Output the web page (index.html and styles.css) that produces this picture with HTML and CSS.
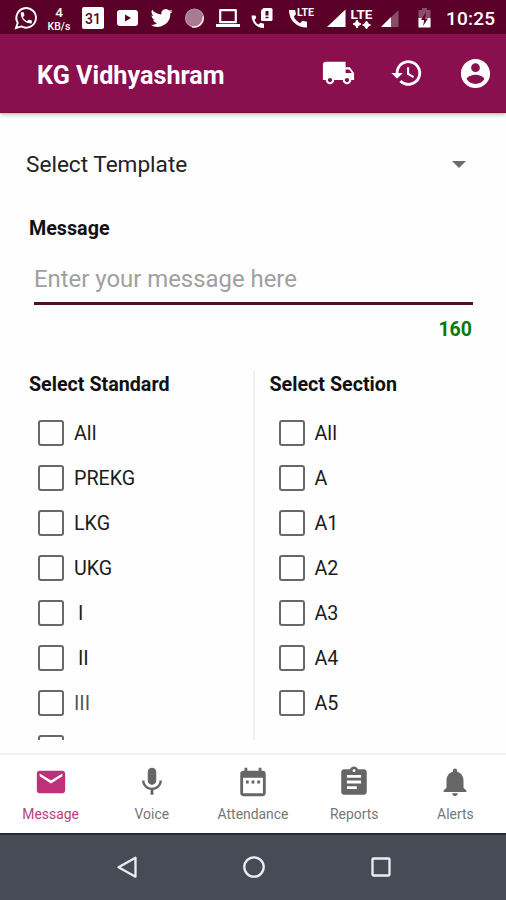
FILE: index.html
```html
<!DOCTYPE html>
<html lang="en">
<head>
<meta charset="utf-8">
<title>KG Vidhyashram</title>
<link rel="stylesheet" href="styles.css">
</head>
<body>
<div class="phone">
  <div class="status">
    <svg class="s-icon" width="24" height="24" viewBox="0 0 24 24"><path d="M2 22l1.700-5.200A9.800 9.800 0 1 1 7.400 20.400z" fill="none" stroke="#fff" stroke-width="1.900"/><path transform="translate(4.800 4.500) scale(.62)" fill="#fff" d="M6.600 10.800c1.400 2.800 3.800 5.100 6.600 6.600l2.200-2.200c.3-.3.7-.4 1-.2 1.100.4 2.300.6 3.600.6.600 0 1 .4 1 1V20c0 .6-.4 1-1 1C10.600 21 3 13.400 3 4c0-.6.5-1 1-1h3.500c.6 0 1 .4 1 1 0 1.300.2 2.500.6 3.600.1.300 0 .7-.3 1z"/></svg>
    <div class="speed"><span class="speed-value">4</span><span>KB/s</span></div>
    <div class="date">31</div>
    <svg class="s-icon" width="23" height="24" viewBox="0 0 23 24"><rect x="1" y="4" width="21" height="16" rx="3" fill="#fff"/><path d="M9 8.500v7l6-3.500z" fill="#5a0029"/></svg>
    <svg class="s-icon" width="23" height="24" viewBox="0 0 24 24"><path fill="#fff" d="M23.600 4.900c-.8.400-1.700.6-2.700.7 1-.6 1.700-1.500 2.100-2.600-.9.500-1.900.9-3 1.100A4.700 4.700 0 0 0 12 8.400C8 8.200 4.500 6.300 2.200 3.400c-1.200 2.100-.6 4.900 1.500 6.300-.8 0-1.500-.2-2.100-.6 0 2.200 1.500 4.300 3.700 4.700-.7.200-1.400.2-2.100.1.600 1.900 2.300 3.200 4.400 3.300A9.500 9.500 0 0 1 .6 19.100a13.400 13.400 0 0 0 20.600-11.900c1-.6 1.800-1.400 2.400-2.300z"/></svg>
    <svg class="s-icon" width="20" height="24" viewBox="0 0 20 24"><circle cx="10.500" cy="12" r="9" fill="#a97b92" stroke="#bd93a8" stroke-width="1.200"/><path d="M19 10.500a9 9 0 0 1-11 10.200" fill="none" stroke="#f3e6ec" stroke-width="1.600"/></svg>
    <svg class="s-icon" width="24" height="24" viewBox="0 0 24 24"><path d="M4.200 4.200h15.600v12H4.200z" fill="none" stroke="#fff" stroke-width="2.200" stroke-linejoin="round"/><path d="M0 18h24v3H0z" fill="#fff"/></svg>
    <svg class="s-icon" width="22" height="24" viewBox="0 0 22 24"><path d="M.5 9.500C1 17 5.500 22 13 22v-4.300l-3.500-1-2 1.800C5.500 17.500 4 15.500 3.500 13.700l1.700-1.600-.7-2.600z" fill="#fff"/><path d="M12.500 2H20q1.500 0 1.500 1.500v10q0 1.500-1.500 1.500h-8.500Q10 15 10 13.500v-9z" fill="#fff"/><path d="M14.500 5h3v4.500h-3zm0 5.700h3v1.600h-3z" fill="#5a0029"/></svg>
    <div class="call-lte">
      <svg width="19" height="24" viewBox="0 0 19 24"><path d="M0 4c0 10 7 17.500 18 17.500v-5.700l-4.500-1-2.500 2.400C8 15.600 6 13.200 4.800 10.500L7 8.200 6 4z" fill="#fff"/></svg>
      <span class="call-tag">LTE</span>
    </div>
    <svg class="s-icon" width="19" height="24" viewBox="0 0 19 24"><path d="M18.500 3.500V21H0z" fill="#fff"/></svg>
    <div class="lte"><span>LTE</span><svg width="20" height="9" viewBox="0 0 20 9"><path d="M5 0l1.500 2.700L9 4 6.500 5.300 5 8 3.500 5.300 1 4l2.500-1.300zM14.500 1l1.500 2.700L18.500 5 16 6.300 14.500 9 13 6.300 10.500 5 13 3.700z" fill="#fff" stroke="#fff"/></svg></div>
    <svg class="s-icon" width="18" height="24" viewBox="0 0 18 24"><path d="M17.500 4v17H0z" fill="#8a4d69"/><path d="M10 11v10H0z" fill="#fff"/></svg>
    <svg class="s-icon" width="14" height="24" viewBox="0 0 14 24"><path d="M4 2h5v2h3.500v17H.5V4H4z" fill="#8a4d69"/><path d="M.5 12h12v9.500H.5z" fill="#fff"/><path d="M8 6l-5 8h3.200L5 20l5-7.500H7z" fill="#5a0029"/></svg>
    <div class="clock">10:25</div>
  </div>

  <header class="appbar">
    <h1>KG Vidhyashram</h1>
    <svg class="truck" width="35" height="34" viewBox="0 0 24 24"><path fill="#fff" d="M20 8h-3V4H3c-1.100 0-2 .9-2 2v11h2c0 1.660 1.340 3 3 3s3-1.340 3-3h6c0 1.660 1.340 3 3 3s3-1.340 3-3h2v-5l-3-4zM6 18.500c-.83 0-1.500-.67-1.500-1.500s.67-1.500 1.500-1.500 1.500.67 1.500 1.500-.67 1.500-1.500 1.500zm13.500-9l1.960 2.500H17V9.500h2.500zm-1.500 9c-.83 0-1.500-.67-1.500-1.500s.67-1.500 1.500-1.500 1.500.67 1.500 1.500-.67 1.500-1.500 1.500z"/></svg>
    <svg class="history" width="34" height="34" viewBox="0 0 24 24"><path fill="#fff" d="M13 3a9 9 0 0 0-9 9H1l3.890 3.890.07.14L9 12H6a7 7 0 1 1 2.060 4.940l-1.420 1.420A9 9 0 1 0 13 3zm-1 5v5l4.280 2.540.72-1.210-3.500-2.080V8H12z"/></svg>
    <svg class="account" width="35" height="35" viewBox="0 0 24 24"><path fill="#fff" d="M12 2C6.480 2 2 6.480 2 12s4.480 10 10 10 10-4.480 10-10S17.520 2 12 2zm0 3c1.660 0 3 1.340 3 3s-1.340 3-3 3-3-1.340-3-3 1.340-3 3-3zm0 14.200c-2.500 0-4.710-1.280-6-3.220.03-1.990 4-3.080 6-3.080 1.990 0 5.970 1.090 6 3.080-1.290 1.940-3.500 3.220-6 3.220z"/></svg>
  </header>

  <main class="content">
    <div class="template"><span>Select Template</span><span class="caret"></span></div>
    <h2 class="message-label">Message</h2>
    <div class="input">Enter your message here</div>
    <div class="count">160</div>
    <div class="columns">
      <section class="column">
        <h2>Select Standard</h2>
        <div class="option"><span class="box"></span><span>All</span></div>
        <div class="option"><span class="box"></span><span>PREKG</span></div>
        <div class="option"><span class="box"></span><span>LKG</span></div>
        <div class="option"><span class="box"></span><span>UKG</span></div>
        <div class="option"><span class="box"></span><span class="indented">I</span></div>
        <div class="option"><span class="box"></span><span class="indented">II</span></div>
        <div class="option"><span class="box"></span><span class="light">III</span></div>
        <div class="option"><span class="box"></span></div>
      </section>
      <section class="column second">
        <h2>Select Section</h2>
        <div class="option"><span class="box"></span><span>All</span></div>
        <div class="option"><span class="box"></span><span>A</span></div>
        <div class="option"><span class="box"></span><span>A1</span></div>
        <div class="option"><span class="box"></span><span>A2</span></div>
        <div class="option"><span class="box"></span><span>A3</span></div>
        <div class="option"><span class="box"></span><span>A4</span></div>
        <div class="option"><span class="box"></span><span>A5</span></div>
      </section>
    </div>
  </main>

  <nav class="tabs">
    <div class="tab active"><svg width="34" height="34" viewBox="0 0 24 24"><path d="M20 4H4c-1.100 0-1.990.9-1.990 2L2 18c0 1.100.9 2 2 2h16c1.100 0 2-.9 2-2V6c0-1.100-.9-2-2-2zm0 4l-8 5-8-5V6l8 5 8-5v2z"/></svg><span>Message</span></div>
    <div class="tab"><svg width="34" height="34" viewBox="0 0 24 24"><path d="M12 14c1.660 0 2.990-1.340 2.990-3L15 5c0-1.660-1.340-3-3-3S9 3.340 9 5v6c0 1.660 1.340 3 3 3zm5.300-3c0 3-2.540 5.100-5.300 5.100S6.700 14 6.700 11H5c0 3.410 2.720 6.230 6 6.720V21h2v-3.280c3.280-.48 6-3.300 6-6.720h-1.700z"/></svg><span>Voice</span></div>
    <div class="tab"><svg width="34" height="34" viewBox="0 0 24 24"><path d="M19 4h-1V2h-2v2H8V2H6v2H5c-1.100 0-2 .9-2 2v14c0 1.100.9 2 2 2h14c1.100 0 2-.9 2-2V6c0-1.100-.9-2-2-2zm0 16H5V9h14zM7 11h2v2H7zm4 0h2v2h-2zm4 0h2v2h-2z"/></svg><span>Attendance</span></div>
    <div class="tab"><svg width="34" height="34" viewBox="0 0 24 24"><path d="M19 3h-4.180C14.400 1.840 13.300 1 12 1s-2.400.84-2.820 2H5c-1.100 0-2 .9-2 2v14c0 1.100.9 2 2 2h14c1.100 0 2-.9 2-2V5c0-1.100-.9-2-2-2zm-7 0c.55 0 1 .45 1 1s-.45 1-1 1-1-.45-1-1 .45-1 1-1zm2 14H7v-2h7v2zm3-4H7v-2h10v2zm0-4H7V7h10v2z"/></svg><span>Reports</span></div>
    <div class="tab"><svg width="34" height="34" viewBox="0 0 24 24"><path d="M12 22c1.100 0 2-.9 2-2h-4c0 1.100.89 2 2 2zm6-6v-5c0-3.070-1.640-5.640-4.500-6.320V4c0-.83-.67-1.500-1.500-1.500s-1.500.67-1.500 1.500v.68C7.630 5.360 6 7.920 6 11v5l-2 2v1h16v-1l-2-2z"/></svg><span>Alerts</span></div>
  </nav>

  <div class="system">
    <svg width="24" height="24" viewBox="0 0 24 24"><path d="M20.500 2.700v19L3.500 12.200z"/></svg>
    <svg width="24" height="24" viewBox="0 0 24 24"><circle cx="12" cy="12" r="9.700"/></svg>
    <svg width="24" height="24" viewBox="0 0 24 24"><rect x="3.500" y="3.500" width="17" height="17" rx="1"/></svg>
  </div>
</div>
</body>
</html>
```
FILE: styles.css
```css
* { box-sizing: border-box; }
body { margin: 0; font-family: Roboto, "Liberation Sans", sans-serif; background: #fefefe; color: #111; }
h1, h2 { margin: 0; }
svg { display: block; flex: none; }
.phone { width: 506px; height: 900px; display: flex; flex-direction: column; overflow: hidden; }

.status {
  height: 34px; flex: none; padding-left: 14px; background: #5a0029; color: #fff;
  display: grid; align-items: center;
  grid-template-columns: 33px 35px 34px 34px 34px 32px 35px 38px 38px 23px 31px 37px 28px 1fr;
}
.speed { width: 24px; display: flex; flex-direction: column; align-items: center; font-size: 10.500px; font-weight: 500; line-height: 13px; }
.speed-value { font-size: 13.500px; line-height: 16px; }
.date { width: 22px; height: 22px; padding-top: 3px; background: #fff; color: #5a0029; border-radius: 2px; font-size: 14px; font-weight: 500; line-height: 18px; text-align: center; }
.call-lte { display: flex; align-items: flex-start; }
.call-tag { margin-left: -11px; font-size: 10.500px; font-weight: 700; line-height: 11px; padding-top: 1px; }
.lte { width: 23px; display: flex; flex-direction: column; align-items: center; font-size: 13.500px; font-weight: 700; line-height: 12px; }
.clock { font-size: 19px; font-weight: 500; line-height: 34px; padding-top: 2px; letter-spacing: .2px; white-space: nowrap; }

.appbar {
  height: 79px; flex: none; display: flex; align-items: center; padding: 0 13px 0 37px;
  background: #890f4f; border-bottom: 1px solid #74103f; color: #fff; box-shadow: 0 1px 4px rgba(0, 0, 0, .35);
}
.appbar h1 { flex: 1; font-size: 25.200px; font-weight: 700; line-height: 32px; padding-top: 5px; white-space: nowrap; }
.history { margin-left: 34px; }
.account { margin-left: 34px; }

.content { height: 640px; flex: none; padding: 33px 33px 0 29px; }
.template { display: flex; align-items: center; justify-content: space-between; height: 36px; margin-left: -3px; padding: 1px 7px 0 0; font-size: 22.600px; color: #222; }
.caret { width: 14px; height: 7px; background: #6d6d6d; clip-path: polygon(0 0, 100% 0, 50% 100%); }
.content h2 { font-size: 19.700px; font-weight: 700; line-height: 24px; white-space: nowrap; }
.content .message-label { margin-top: 35px; }
.input { height: 64px; margin-left: 5px; border-bottom: 3px solid #4d1029; font-size: 23.900px; line-height: 76px; color: #a0a0a0; }
.count { height: 24px; margin-top: 12px; padding-right: 1px; text-align: right; font-size: 19.500px; font-weight: 700; line-height: 26px; color: #087a0c; }
.columns { display: grid; grid-template-columns: 226px 1fr; height: 370px; margin-top: 29px; overflow: hidden; }
.column { padding-top: 3px; border-right: 2px solid #f1f1f1; }
.column.second { padding-left: 14.500px; border-right: 0; }
.column h2 { margin-bottom: 13px; }
.option { display: flex; align-items: center; gap: 10px; height: 45px; padding-left: 9px; font-size: 19.700px; line-height: 24px; color: #1c1c1c; }
.option span + span { padding-top: 3px; }
.box { width: 26px; height: 26px; border: 2px solid #686868; border-radius: 3px; }
.indented { padding-left: 4px; }
.light { color: #555; }

.tabs { height: 80px; flex: none; display: grid; grid-template-columns: repeat(5, 1fr); background: #fff; border-top: 2px solid #f1f1f1; }
.tab { display: flex; flex-direction: column; align-items: center; padding-top: 10px; font-size: 13.900px; line-height: 20px; color: #777; }
.tab svg { fill: #666; margin-bottom: 5px; }
.tab.active { color: #be3c7d; }
.tab.active svg { fill: #bf3079; }

.system { flex: 1; display: flex; justify-content: center; align-items: center; gap: 103px; padding: 0 0 2px 1px; background: #454c55; border-top: 2px solid #1f2d3d; }
.system svg { fill: none; stroke: #e9eef3; stroke-width: 2.300; stroke-linejoin: round; }
```
